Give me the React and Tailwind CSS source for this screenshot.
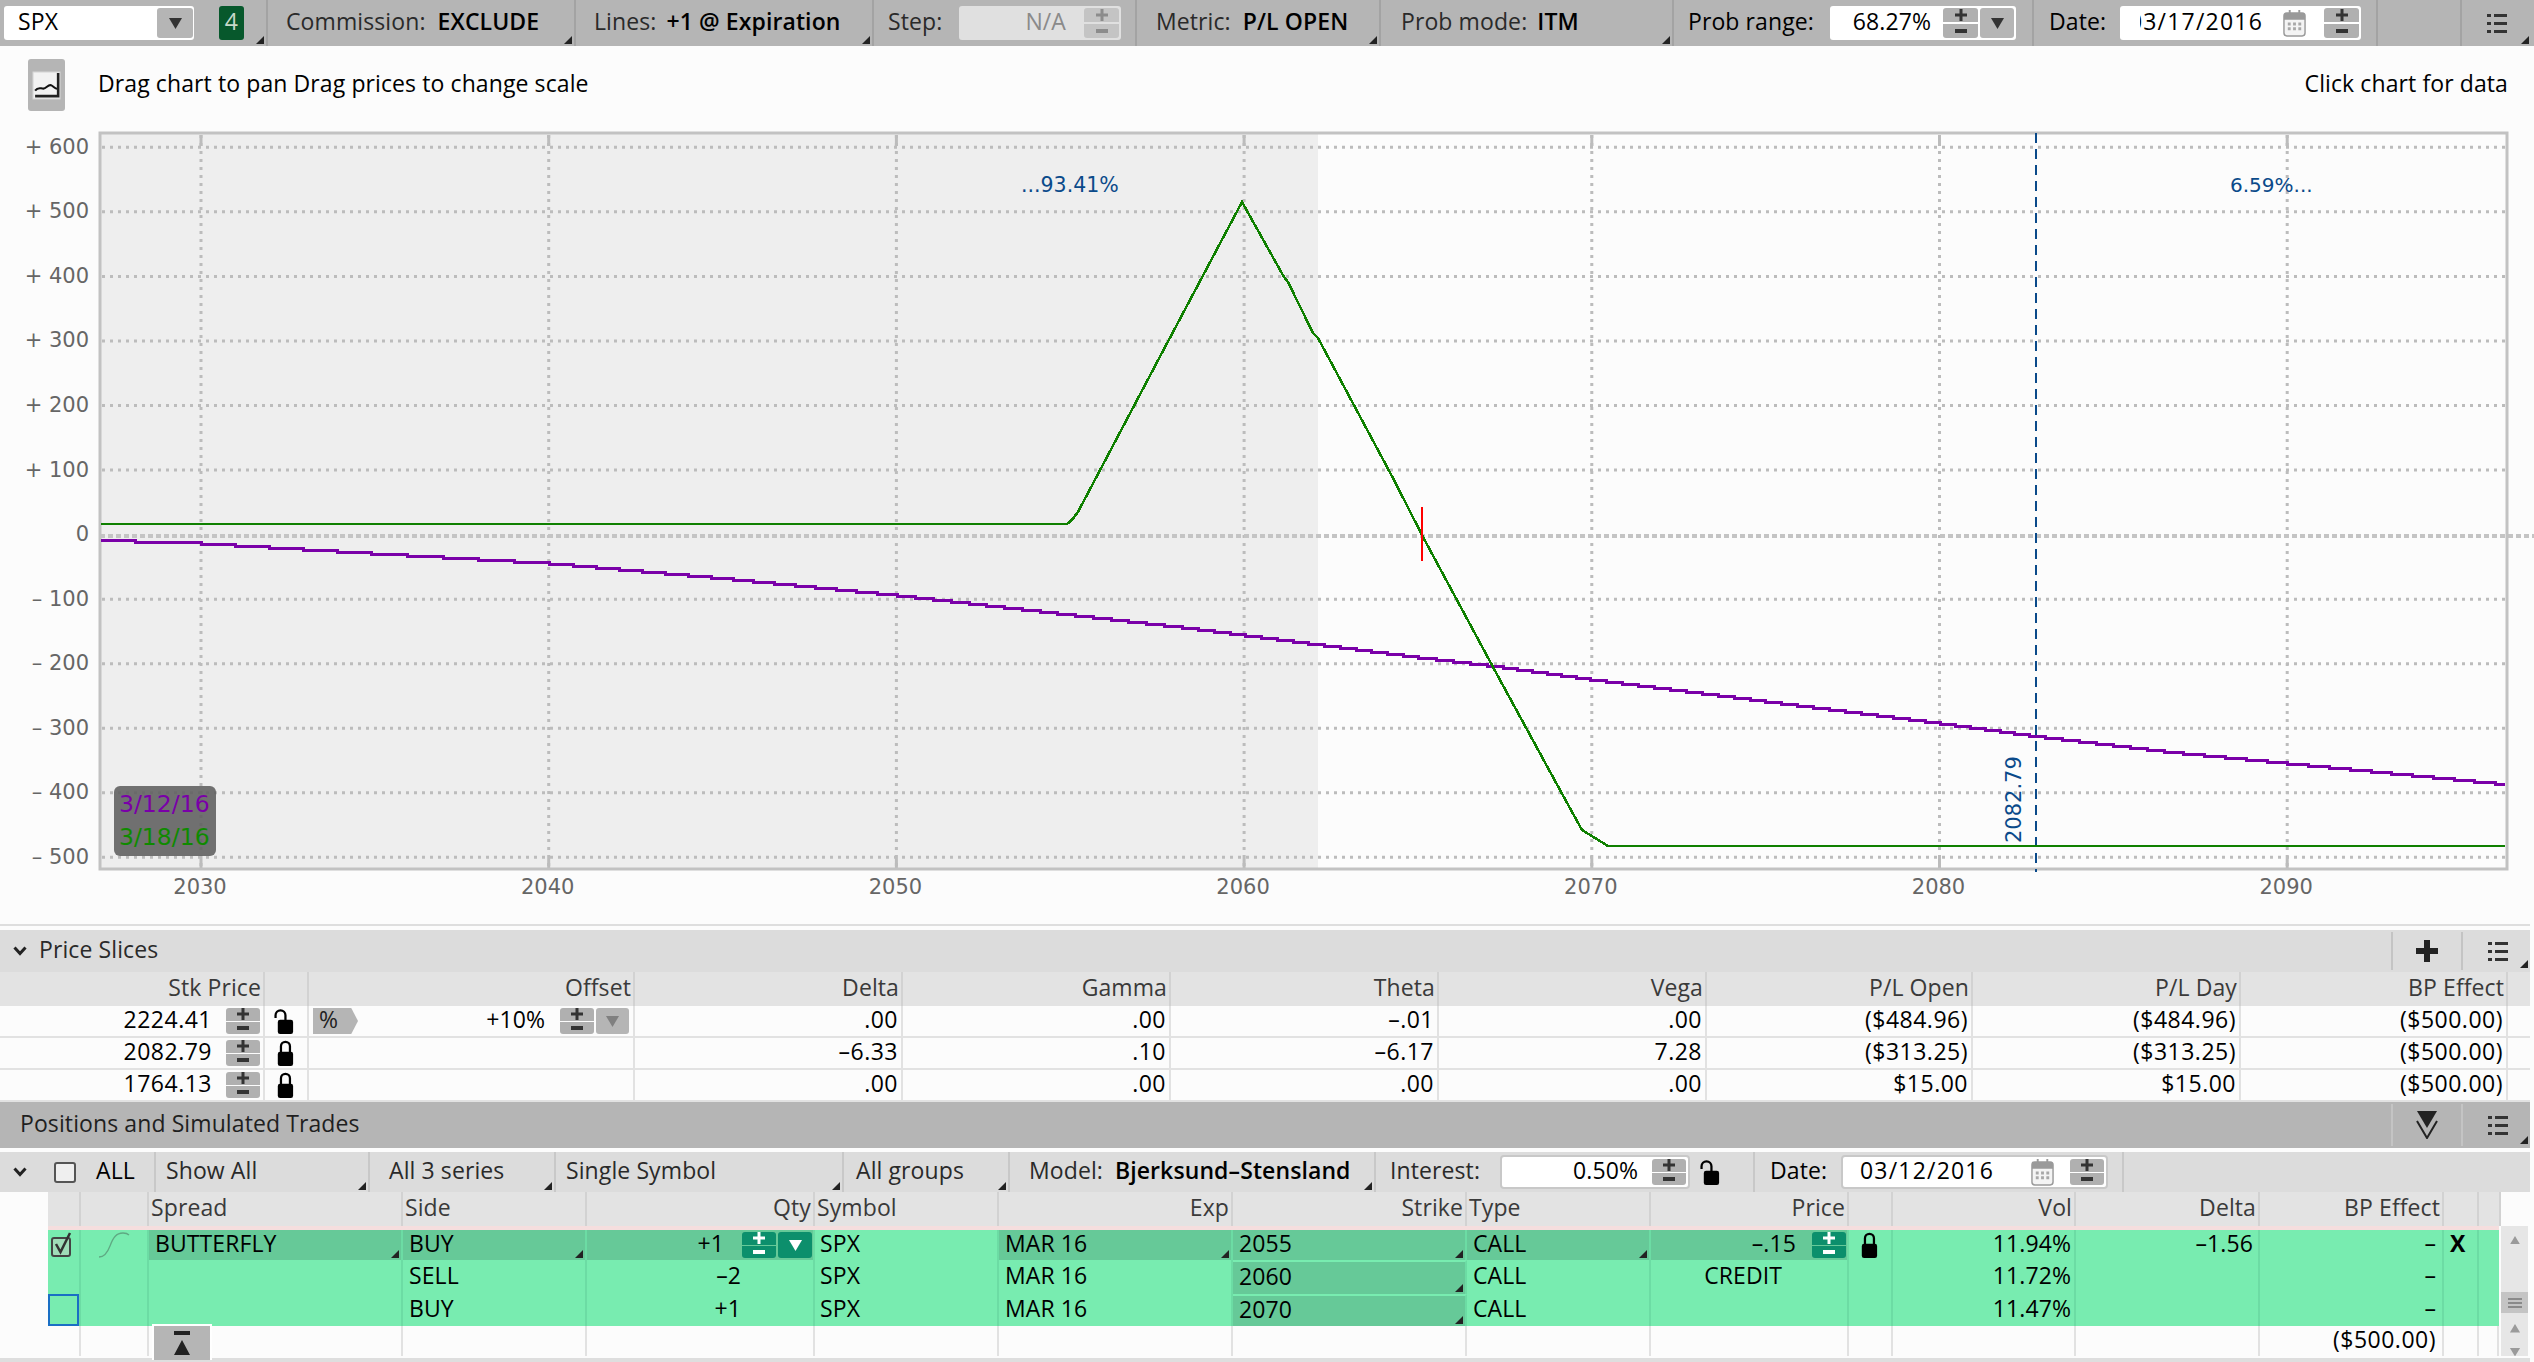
import React from 'react';

const hLevels = [600, 500, 400, 300, 200, 100, -100, -200, -300, -400, -500];
const xLevels = [2030, 2040, 2050, 2060, 2070, 2080, 2090];
const yOf = (v) => 534.6 - v * 0.6455;
const xOf = (p) => 201 + (p - 2030) * 34.77;

const greenPath =
  'M101 524 L1067 524 Q1073 520 1079 510 L1164 349 L1242 202 L1284 277 L1288 282 L1313 333 L1318 338 L1394 480 L1423 537 L1500 680 L1560 790 L1582 830 L1608 846 L2505 846';

const purplePoints = [
  [101, 540], [201, 543], [371, 553], [549, 563], [722, 578], [897, 595], [1190, 628], [1300, 642],
  [1418, 657], [1495, 666], [1590, 679], [1940, 723], [2036, 736], [2172, 752], [2287, 763], [2505, 784],
];

// the chart draws in 2px steps, so walk the curve pixel by pixel
function stairPath(points) {
  let prev = points[0][1];
  let d = `M${points[0][0]} ${prev}`;
  for (let i = 1; i < points.length; i++) {
    const [x0, y0] = points[i - 1];
    const [x1, y1] = points[i];
    for (let x = x0; x <= x1; x++) {
      const y = Math.round((y0 + ((y1 - y0) * (x - x0)) / (x1 - x0)) / 2) * 2;
      if (y !== prev) {
        d += ` H${x} V${y}`;
        prev = y;
      }
    }
  }
  return `${d} H${points[points.length - 1][0]}`;
}

function Chart() {
  return (
    <svg viewBox="0 120 2534 800" className="block w-[2534px] h-[800px] tracking-normal" fontFamily="'DejaVu Sans', sans-serif">
      <rect x="100" y="134" width="1218" height="735" fill="#eeeeee" />
      {hLevels.map((v) => (
        <line key={v} x1="102" x2="2505" y1={yOf(v)} y2={yOf(v)} stroke="#bcbcbc" strokeWidth="3" strokeDasharray="3 5" />
      ))}
      {xLevels.map((p) => (
        <g key={p}>
          <line x1={xOf(p)} x2={xOf(p)} y1="135" y2="868" stroke="#bcbcbc" strokeWidth="3" strokeDasharray="3 5" />
          <line x1={xOf(p)} x2={xOf(p)} y1="135" y2="146" stroke="#bcbcbc" strokeWidth="3" />
          <line x1={xOf(p)} x2={xOf(p)} y1="858" y2="868" stroke="#bcbcbc" strokeWidth="3" />
          <text x={xOf(p) - 1} y="894" textAnchor="middle" fontSize="21" fill="#666666">{p}</text>
        </g>
      ))}
      <line x1="100" x2="2534" y1="536" y2="536" stroke="#c4c4c4" strokeWidth="4" strokeDasharray="5 3" />
      <rect x="100" y="133" width="2407" height="736" fill="none" stroke="#c2c2c2" strokeWidth="3" />

      {[600, 500, 400, 300, 200, 100].map((v) => (
        <text key={v} x="89" y={yOf(v) + 6.5} textAnchor="end" fontSize="21" fill="#666666">+ {v}</text>
      ))}
      <text x="89" y="541" textAnchor="end" fontSize="21" fill="#666666">0</text>
      {[-100, -200, -300, -400, -500].map((v) => (
        <text key={v} x="89" y={yOf(v) + 6.5} textAnchor="end" fontSize="21" fill="#666666">– {-v}</text>
      ))}

      <line x1="2036" x2="2036" y1="133" y2="872" stroke="#0a4a8a" strokeWidth="2" strokeDasharray="10 6" />
      <text x="1021" y="192" fontSize="20.500" fill="#0a4a8a">...93.41%</text>
      <text x="2230" y="192" fontSize="20" fill="#0a4a8a">6.59%...</text>
      <text transform="translate(2021 843) rotate(-90)" fontSize="21" fill="#0a4a8a">2082.79</text>

      <path d={stairPath(purplePoints)} fill="none" stroke="#7a00a8" strokeWidth="3" shapeRendering="crispEdges" />
      <path d={greenPath} fill="none" stroke="#0f8000" strokeWidth="2.5" shapeRendering="crispEdges" />
      <line x1="1422" x2="1422" y1="507" y2="561" stroke="#ff0000" strokeWidth="2" />

      <rect x="114" y="786" width="102" height="70" rx="6" fill="#5e5e5e" fillOpacity="0.88" />
      <text x="119" y="812" fontSize="23.5" fill="#7a00a8">3/12/16</text>
      <text x="119" y="845" fontSize="23.5" fill="#0f8a00">3/18/16</text>
    </svg>
  );
}

function Corner() {
  return (
    <svg viewBox="0 0 8 8" className="absolute right-[2px] bottom-[2px] w-[8px] h-[8px]">
      <path d="M8 0V8H0z" fill="#222222" />
    </svg>
  );
}

// Open Sans sits a little low next to the boxes, lift it
function T({ className = '', children }) {
  return <span className={`pb-[3px] ${className}`}>{children}</span>;
}

function Plus({ color }) {
  return (
    <svg viewBox="0 0 12 12" className="w-[12px] h-[12px]">
      <path d="M4.5 0h3v4.5H12v3H7.5V12h-3V7.5H0v-3h4.5z" fill={color} />
    </svg>
  );
}

function Minus({ color }) {
  return (
    <svg viewBox="0 0 12 12" className="w-[12px] h-[12px]">
      <path d="M0 4h12v4H0z" fill={color} />
    </svg>
  );
}

function Stepper({ tall, green, faded }) {
  const box = green ? 'bg-[#0c8f6c]' : faded ? 'bg-[#c4c4c4]' : 'bg-[#b0b0b0]';
  const ink = green ? '#ffffff' : faded ? '#8c8c8c' : '#333333';
  return (
    <div className={tall ? 'flex flex-col gap-[2px] w-[35px] h-[30px] shrink-0' : 'flex flex-col gap-[1px] w-[34px] h-[26px] shrink-0'}>
      <div className={`flex-1 flex items-center justify-center rounded-t-[3px] ${box}`}><Plus color={ink} /></div>
      <div className={`flex-1 flex items-center justify-center rounded-b-[3px] ${box}`}><Minus color={ink} /></div>
    </div>
  );
}

function DropButton({ className, color = '#333333' }) {
  return (
    <div className={`flex items-center justify-center rounded-[3px] shrink-0 ${className}`}>
      <svg viewBox="0 0 12 10" className="w-[13px] h-[11px]"><path d="M0 0h12L6 10z" fill={color} /></svg>
    </div>
  );
}

function ListIcon() {
  return (
    <svg viewBox="0 0 22 22" className="w-[22px] h-[22px]" fill="#333333">
      <path d="M1 2h4v3H1zM8 2h13v3H8zM1 10h4v3H1zM8 10h13v3H8zM1 18h4v3H1zM8 18h13v3H8z" />
    </svg>
  );
}

function Calendar() {
  return (
    <svg viewBox="0 0 24 28" className="w-[23px] h-[27px] shrink-0">
      <rect x="1" y="3" width="22" height="24" rx="3" fill="#f4f4f4" stroke="#9a9a9a" strokeWidth="1.5" />
      <path d="M1 6a3 3 0 0 1 3-3h16a3 3 0 0 1 3 3v4H1z" fill="#9a9a9a" />
      <path d="M6 0h2v5H6zM16 0h2v5h-2z" fill="#9a9a9a" />
      <path d="M5 13h3v3H5zM10.500 13h3v3h-3zM16 13h3v3h-3zM5 18h3v3H5zM10.500 18h3v3h-3zM16 18h3v3h-3z" fill="#a8a8a8" />
    </svg>
  );
}

function Lock({ open }) {
  return (
    <svg viewBox="0 0 24 30" className="w-[22px] h-[27px] shrink-0">
      <rect x="4" y="13" width="17" height="16" rx="2.500" fill="#000000" />
      {open ? (
        <path d="M1.500 11V8a5.500 5.500 0 0 1 11 0v6" fill="none" stroke="#000000" strokeWidth="2.500" />
      ) : (
        <path d="M7.500 14V7a5 5 0 0 1 10 0v7" fill="none" stroke="#000000" strokeWidth="2.500" />
      )}
    </svg>
  );
}

function Chevron() {
  return (
    <svg viewBox="0 0 14 10" className="w-[14px] h-[10px]">
      <path d="M1.500 1.500 7 7.500l5.500-6" fill="none" stroke="#222222" strokeWidth="3" />
    </svg>
  );
}

function TopSection({ className, children, corner }) {
  return (
    <div className={`relative h-full flex items-center border-r-2 border-[#a3a3a3] whitespace-nowrap shrink-0 ${className}`}>
      {children}
      {corner && <Corner />}
    </div>
  );
}

function TopBar() {
  return (
    <div className="flex h-[46px] bg-[#b5b5b5] text-[#2a2a2a] shrink-0">
      <TopSection className="w-[268px] pl-1">
        <div className="w-[190px] h-[34px] bg-white rounded-[3px] flex items-center justify-between pl-[14px] pr-[1px] text-black">
          <T>SPX</T>
          <DropButton className="w-[36px] h-[30px] bg-[#b5b5b5]" />
        </div>
        <div className="ml-[25px] w-[25px] h-[34px] rounded-[3px] bg-[#07582c] text-[#c8d8c8] flex items-center justify-center"><T>4</T></div>
        <Corner />
      </TopSection>
      <TopSection className="w-[308px] pl-[18px]" corner>
        <T>Commission:</T><T className="ml-[12px] text-black font-semibold">EXCLUDE</T>
      </TopSection>
      <TopSection className="w-[298px] pl-[18px]" corner>
        <T>Lines:</T><T className="ml-[10px] text-black font-semibold">+1 @ Expiration</T>
      </TopSection>
      <TopSection className="w-[263px] pl-[14px]">
        <T>Step:</T>
        <div className="ml-auto mr-[14px] w-[162px] h-[34px] bg-[#e0e0e0] rounded-[3px] flex items-center justify-end gap-[18px] pr-[2px] text-[#8a8a8a]">
          <T>N/A</T>
          <Stepper tall faded />
        </div>
      </TopSection>
      <TopSection className="w-[244px] pl-[19px]" corner>
        <T>Metric:</T><T className="ml-[12px] text-black font-semibold">P/L OPEN</T>
      </TopSection>
      <TopSection className="w-[293px] pl-[20px]" corner>
        <T>Prob mode:</T><T className="ml-[10px] text-black font-semibold">ITM</T>
      </TopSection>
      <TopSection className="w-[360px] pl-[14px]">
        <T className="text-black">Prob range:</T>
        <div className="ml-auto mr-[16px] w-[186px] h-[34px] bg-white rounded-[3px] flex items-center justify-end gap-[12px] pr-[2px] text-black">
          <T>68.27%</T>
          <div className="flex gap-[2px]">
            <Stepper tall />
            <DropButton className="w-[34px] h-[30px] bg-[#b5b5b5]" />
          </div>
        </div>
      </TopSection>
      <TopSection className="w-[344px] pl-[15px]">
        <T className="text-black">Date:</T>
        <div className="ml-auto mr-[15px] w-[241px] h-[34px] bg-white rounded-[3px] flex items-center pl-[20px] pr-[2px] text-black">
          <div className="w-[123px] flex justify-end overflow-hidden">
            <T className="shrink-0 tracking-[1.2px]">03/17/2016</T>
          </div>
          <div className="ml-auto"><Calendar /></div>
          <div className="ml-[18px]"><Stepper tall /></div>
        </div>
      </TopSection>
      <TopSection className="w-[84px]"><span /></TopSection>
      <div className="relative w-[69px] h-full flex items-center pl-[24px]">
        <ListIcon />
        <Corner />
      </div>
    </div>
  );
}

function InfoRow() {
  return (
    <div className="flex items-center h-[74px] pl-[28px] pr-[26px] shrink-0">
      <div className="w-[37px] h-[52px] rounded-[3px] bg-[#b5b5b5] flex items-center justify-center mt-[4px]">
        <svg viewBox="0 0 28 28" className="w-[29px] h-[29px]">
          <rect x="1" y="1" width="26" height="26" fill="#f2f2f2" stroke="#d8d8d8" />
          <path d="M3 19c3-4 5-2 8-2s5-5 8-3 4 4 6 3" fill="none" stroke="#111111" strokeWidth="2" />
          <path d="M3 23h21V2h2.500v23.500H3z" fill="#222222" />
        </svg>
      </div>
      <span className="ml-[33px] text-black">Drag chart to pan Drag prices to change scale</span>
      <span className="ml-auto text-black">Click chart for data</span>
    </div>
  );
}

function PanelHeader({ title, className, action, titleClass }) {
  return (
    <div className={`flex items-center shrink-0 w-[2530px] ${className}`}>
      <div className={`flex items-center flex-1 ${titleClass}`}>{title}</div>
      <div className="self-stretch w-[70px] flex items-center justify-center border-l-2 border-[#c4c4c4] my-[2px]">{action}</div>
      <div className="relative self-stretch w-[69px] flex items-center pl-[24px] border-l-2 border-[#c4c4c4] my-[2px]">
        <ListIcon />
        <Corner />
      </div>
    </div>
  );
}

const sliceGrid = 'grid grid-cols-[265px_44px_326px_268px_268px_268px_268px_266px_268px_267px_22px] w-[2530px]';

const sliceHead = ['Stk Price', '', 'Offset', 'Delta', 'Gamma', 'Theta', 'Vega', 'P/L Open', 'P/L Day', 'BP Effect', ''];

const sliceRows = [
  { stk: '2224.41', open: true, offset: true, h: 'h-[32px]', vals: ['.00', '.00', '–.01', '.00', '($484.96)', '($484.96)', '($500.00)'] },
  { stk: '2082.79', h: 'h-[32px]', vals: ['–6.33', '.10', '–6.17', '7.28', '($313.25)', '($313.25)', '($500.00)'] },
  { stk: '1764.13', h: 'h-[32px] border-b-0', vals: ['.00', '.00', '.00', '.00', '$15.00', '$15.00', '($500.00)'] },
];

function PriceSlices() {
  return (
    <div className="shrink-0">
      <div className="h-[10px] flex items-center"><div className="h-[2px] w-[2530px] bg-[#dedede]" /></div>
      <PanelHeader
        className="h-[42px] bg-[#dcdcdc]"
        titleClass="pl-[13px] gap-[12px] text-[#2a2a2a]"
        title={<><Chevron /><T>Price Slices</T></>}
        action={
          <svg viewBox="0 0 22 22" className="w-[22px] h-[22px]"><path d="M8 0h6v8h8v6h-8v8H8v-8H0V8h8z" fill="#222222" /></svg>
        }
      />
      <div className={`${sliceGrid} h-[34px] bg-[#e3e3e3] text-[#3a3a3a]`}>
        {sliceHead.map((h, i) => (
          <div key={i} className="flex items-center justify-end pr-[2px] pb-[3px] border-r-2 border-[#d2d2d2] last:border-r-0">{h}</div>
        ))}
      </div>
      {sliceRows.map((r) => (
        <div key={r.stk} className={`${sliceGrid} ${r.h} border-b-2 border-[#e2e2e2] text-black`}>
          <div className="flex items-center justify-end gap-[14px] pr-[3px] border-r-2 border-[#e2e2e2]">
            <T className="tracking-[0.5px]">{r.stk}</T>
            <Stepper />
          </div>
          <div className="flex items-center pl-[9px] border-r-2 border-[#e2e2e2]"><Lock open={r.open} /></div>
          <div className="flex items-center border-r-2 border-[#e2e2e2] pl-[4px] pr-[4px]">
            {r.offset && (
              <>
                <div className="w-[45px] h-[26px] bg-[#b5b5b5] flex items-center pl-[6px] text-[#222222] [clip-path:polygon(0_0,85%_0,100%_50%,85%_100%,0_100%)]"><T>%</T></div>
                <T className="ml-auto">+10%</T>
                <div className="ml-[15px] flex gap-[2px]">
                  <Stepper />
                  <DropButton className="w-[33px] h-[26px] bg-[#b5b5b5]" color="#808080" />
                </div>
              </>
            )}
          </div>
          {r.vals.map((v, i) => (
            <div key={i} className="flex items-center justify-end pr-[3px] border-r-2 border-[#e2e2e2]"><T className="tracking-[0.5px]">{v}</T></div>
          ))}
          <div />
        </div>
      ))}
    </div>
  );
}

function ToolLabel({ className, children }) {
  return (
    <div className={`relative h-full flex items-center whitespace-nowrap border-r-2 border-[#c8c8c8] shrink-0 ${className}`}>
      {children}
      <Corner />
    </div>
  );
}

function ToolRow() {
  return (
    <div className="flex items-center h-[40px] w-[2530px] mt-[4px] bg-[#dcdcdc] text-[#2a2a2a] shrink-0">
      <div className="w-[156px] h-full flex items-center pl-[13px] border-r-2 border-[#c8c8c8]">
        <Chevron />
        <div className="ml-[27px] w-[22px] h-[21px] rounded-[3px] border-2 border-[#555555] bg-[#efefef]" />
        <T className="ml-[20px] text-black">ALL</T>
      </div>
      <ToolLabel className="w-[214px] pl-[10px]"><T>Show All</T></ToolLabel>
      <ToolLabel className="w-[186px] pl-[19px]"><T>All 3 series</T></ToolLabel>
      <ToolLabel className="w-[288px] pl-[10px]"><T>Single Symbol</T></ToolLabel>
      <ToolLabel className="w-[166px] pl-[12px]"><T>All groups</T></ToolLabel>
      <ToolLabel className="w-[366px] pl-[19px]">
        <T>Model:</T><T className="ml-[12px] text-black font-semibold">Bjerksund–Stensland</T>
      </ToolLabel>
      <div className="w-[379px] h-full flex items-center pl-[14px] border-r-2 border-[#c8c8c8] shrink-0">
        <T>Interest:</T>
        <div className="ml-auto w-[190px] h-[34px] bg-white rounded-[4px] border-2 border-[#c8c8c8] flex items-center justify-end gap-[14px] pr-[2px] text-black">
          <T>0.50%</T>
          <Stepper />
        </div>
        <div className="ml-[10px] mr-[31px]"><Lock open /></div>
      </div>
      <div className="w-[369px] h-full flex items-center pl-[15px] border-r-2 border-[#c8c8c8] shrink-0">
        <T className="text-black">Date:</T>
        <div className="ml-auto mr-[14px] w-[267px] h-[34px] bg-white rounded-[4px] border-2 border-[#c8c8c8] flex items-center justify-between pl-[17px] pr-[2px] text-black">
          <T className="tracking-[1.2px]">03/12/2016</T>
          <div className="flex items-center gap-[16px]">
            <Calendar />
            <Stepper />
          </div>
        </div>
      </div>
    </div>
  );
}

const posGrid = 'grid grid-cols-[33px_68px_254px_184px_228px_184px_234px_234px_184px_198px_44px_183px_184px_184px_35px_22px] w-[2453px]';
// the green rows stop 2px short of the header
const posRowGrid = 'grid grid-cols-[33px_68px_254px_184px_228px_184px_234px_234px_184px_198px_44px_183px_184px_184px_35px_20px] w-[2451px]';

const posHead = [
  ['', ''], ['', ''], ['Spread', 'l'], ['Side', 'l'], ['Qty', 'r'], ['Symbol', 'l'], ['Exp', 'r'], ['Strike', 'r'],
  ['Type', 'l'], ['Price', 'r'], ['', ''], ['Vol', 'r'], ['Delta', 'r'], ['BP Effect', 'r'], ['', ''], ['', ''],
];

const dark = 'bg-[#66c998]';
const line = 'border-r-2 border-[#6cdca4]';

function GreenCell({ className = '', children, corner }) {
  return (
    <div className={`relative flex items-center ${className}`}>
      {children}
      {corner && <Corner />}
    </div>
  );
}

function PositionRow({ h, side, qty, strike, vol, first, last, credit }) {
  return (
    <div className={`${posRowGrid} ${h} bg-[#78ecb0] text-black`}>
      <GreenCell className={`${line} pl-[2px]`}>
        {first && (
          <svg viewBox="0 0 24 26" className="w-[24px] h-[26px]">
            <rect x="2" y="6" width="18" height="18" rx="2" fill="#9fdcb8" stroke="#444444" strokeWidth="2" />
            <path d="M6 12l4.500 8L20 1" fill="none" stroke="#333333" strokeWidth="2.500" />
          </svg>
        )}
        {last && <div className="absolute inset-0 border-2 border-[#1a6fc4]" />}
      </GreenCell>
      <GreenCell className={`${line} pl-[17px]`}>
        {first && (
          <svg viewBox="0 0 32 26" className="w-[32px] h-[26px]">
            <path d="M1 25C6 25 9 22 12 14S18 1 25 1C28 1 30 2 31 3" fill="none" stroke="#5fa983" strokeWidth="1.300" />
          </svg>
        )}
      </GreenCell>
      <GreenCell className={`${line} pl-[6px] ${first ? dark : ''}`} corner={first}>{first && <T>BUTTERFLY</T>}</GreenCell>
      <GreenCell className={`${line} pl-[6px] ${first ? dark : ''}`} corner={first}><T>{side}</T></GreenCell>
      {first ? (
        <GreenCell className={`${line} justify-end pr-[1px] gap-[18px] ${dark}`}>
          <T>{qty}</T>
          <div className="flex gap-[2px]">
            <Stepper green />
            <DropButton className="w-[34px] h-[26px] bg-[#0c8f6c]" color="#ffffff" />
          </div>
        </GreenCell>
      ) : (
        <GreenCell className={`${line} justify-end pr-[72px]`}><T>{qty}</T></GreenCell>
      )}
      <GreenCell className={`${line} pl-[5px]`}><T>SPX</T></GreenCell>
      <GreenCell className={`${line} pl-[6px] ${first ? dark : ''}`} corner={first}><T>MAR 16</T></GreenCell>
      <GreenCell className={`${line} pl-[6px] ${dark} ${first ? '' : 'border-t-2 border-t-[#78ecb0]'}`} corner><T>{strike}</T></GreenCell>
      <GreenCell className={`${line} pl-[6px] ${first ? dark : ''}`} corner={first}><T>CALL</T></GreenCell>
      {first ? (
        <GreenCell className={`${line} justify-end pr-[1px] gap-[16px] ${dark}`}>
          <T>–.15</T>
          <Stepper green />
        </GreenCell>
      ) : (
        <GreenCell className={`${line} justify-end pr-[65px]`}><T>{credit}</T></GreenCell>
      )}
      <GreenCell className={`${line} pl-[9px]`}>{first && <Lock />}</GreenCell>
      <GreenCell className={`${line} justify-end pr-[3px]`}><T>{vol}</T></GreenCell>
      <GreenCell className={`${line} justify-end pr-[5px]`}>{first && <T>–1.56</T>}</GreenCell>
      <GreenCell className={`${line} justify-end pr-[6px]`}><T>–</T></GreenCell>
      <GreenCell className={`${line} pl-[6px] font-bold`}>{first && <T>X</T>}</GreenCell>
      <GreenCell />
    </div>
  );
}

function ScrollBar() {
  return (
    <div className="w-[27px] ml-[2px] h-[130px] bg-[#e6e6e6] flex flex-col items-center shrink-0">
      <svg viewBox="0 0 12 10" className="w-[12px] h-[9px] mt-[10px]"><path d="M6 0l6 10H0z" fill="#9a9a9a" /></svg>
      <div className="mt-[48px] w-full h-[22px] bg-[#c4c4c4] flex items-center justify-center">
        <svg viewBox="0 0 14 12" className="w-[14px] h-[12px]"><path d="M0 1h14v2H0zM0 5h14v2H0zM0 9h14v2H0z" fill="#8a8a8a" /></svg>
      </div>
      <svg viewBox="0 0 12 10" className="w-[12px] h-[9px] mt-[11px]"><path d="M6 0l6 10H0z" fill="#9a9a9a" /></svg>
      <svg viewBox="0 0 12 10" className="w-[12px] h-[9px] mt-[15px]"><path d="M0 0h12L6 10z" fill="#9a9a9a" /></svg>
    </div>
  );
}

function Positions() {
  return (
    <div className="shrink-0">
      <PanelHeader
        className="h-[46px] bg-[#b5b5b5]"
        titleClass="pl-[20px] text-[#1f1f1f]"
        title={<T>Positions and Simulated Trades</T>}
        action={
          <svg viewBox="0 0 22 28" className="w-[22px] h-[28px]">
            <path d="M1 0h20L11 17z" fill="#222222" />
            <path d="M1 10l10 17L21 10" fill="none" stroke="#222222" strokeWidth="2" />
          </svg>
        }
      />
      <ToolRow />
      <div className="pl-[48px]">
        <div className={`${posGrid} h-[34px] bg-[#e3e3e3] text-[#3a3a3a]`}>
          {posHead.map(([t, align], i) => (
            <div
              key={i}
              className={
                align === 'r'
                  ? 'flex items-center justify-end pr-[2px] pb-[3px] border-r-2 border-[#d2d2d2]'
                  : 'flex items-center pl-[2px] pb-[3px] border-r-2 border-[#d2d2d2]'
              }
            >
              {t}
            </div>
          ))}
        </div>
        <div className="flex">
          <div>
            <div className="h-[4px] w-[2451px] bg-[#f5dede]" />
            <PositionRow h="h-[30px]" first side="BUY" qty="+1" strike="2055" vol="11.94%" />
            <PositionRow h="h-[34px]" side="SELL" qty="–2" strike="2060" vol="11.72%" credit="CREDIT" />
            <PositionRow h="h-[32px]" last side="BUY" qty="+1" strike="2070" vol="11.47%" />
            <div className={`${posRowGrid} relative h-[30px] text-black`}>
              {posHead.map((_, i) => (
                <div key={i} className="flex items-center justify-end pr-[6px] border-r-2 border-[#e2e2e2] last:border-r-0">
                  {i === 13 && <T className="tracking-[0.5px]">($500.00)</T>}
                </div>
              ))}
              <div className="absolute left-[104px] top-[-2px] w-[60px] h-[36px] bg-[#b5b5b5] border-t-2 border-x-2 border-white flex items-center justify-center">
                <svg viewBox="0 0 18 24" className="w-[18px] h-[24px]">
                  <path d="M1 0h16v4H1zM9 9l8 15H1z" fill="#222222" />
                </svg>
              </div>
            </div>
          </div>
          <ScrollBar />
        </div>
      </div>
      <div className="mt-[2px] h-[4px] w-[2530px] bg-[#dedede]" />
    </div>
  );
}

export default function App() {
  return (
    <div className="w-full h-screen overflow-hidden flex flex-col bg-[#fcfcfc] font-['Open_Sans',sans-serif] text-[23px] tracking-[0.1px] leading-none">
      <TopBar />
      <InfoRow />
      <Chart />
      <PriceSlices />
      <Positions />
    </div>
  );
}
